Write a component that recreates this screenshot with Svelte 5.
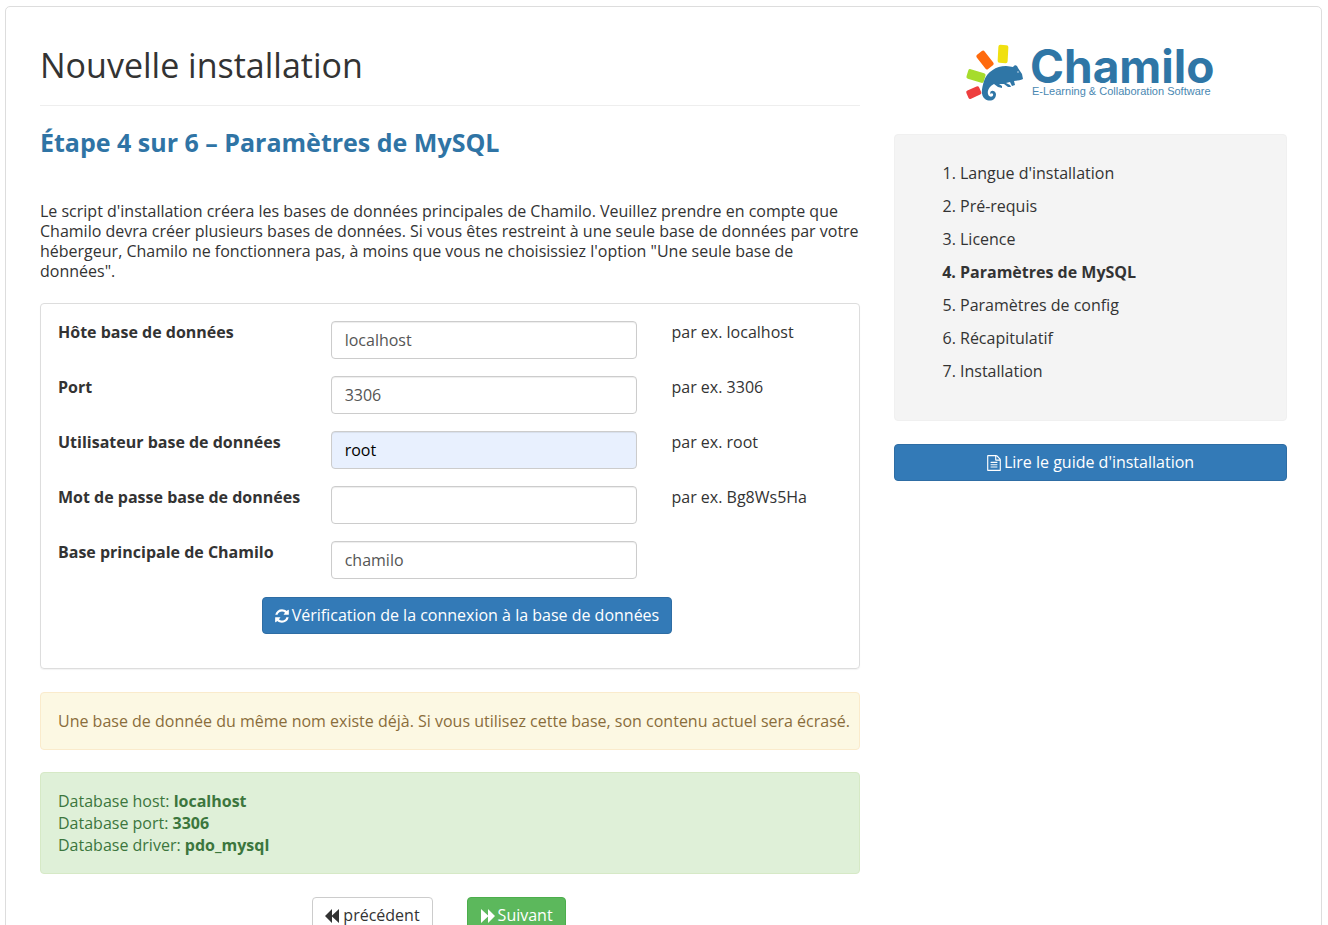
<script>
	const steps = [
		"Langue d'installation",
		'Pré-requis',
		'Licence',
		'Paramètres de MySQL',
		'Paramètres de config',
		'Récapitulatif',
		'Installation'
	];
	const currentStep = 4;

	let fields = $state([
		{ id: 'dbHost', label: 'Hôte base de données', type: 'text', value: 'localhost', hint: 'par ex. localhost' },
		{ id: 'dbPort', label: 'Port', type: 'text', value: '3306', hint: 'par ex. 3306' },
		{ id: 'dbUser', label: 'Utilisateur base de données', type: 'text', value: 'root', hint: 'par ex. root', filled: true },
		{ id: 'dbPass', label: 'Mot de passe base de données', type: 'password', value: '', hint: 'par ex. Bg8Ws5Ha' },
		{ id: 'dbName', label: 'Base principale de Chamilo', type: 'text', value: 'chamilo', hint: '' }
	]);

	const connection = [
		['host', 'localhost'],
		['port', '3306'],
		['driver', 'pdo_mysql']
	];
</script>

<svelte:head>
	<title>Chamilo installation</title>
</svelte:head>

<div class="page">
	<main class="content">
		<h1>Nouvelle installation</h1>
		<h2>Étape 4 sur 6 – Paramètres de MySQL</h2>

		<p class="intro">
			Le script d'installation créera les bases de données principales de Chamilo. Veuillez prendre en compte que
			Chamilo devra créer plusieurs bases de données. Si vous êtes restreint à une seule base de données par votre
			hébergeur, Chamilo ne fonctionnera pas, à moins que vous ne choisissiez l'option "Une seule base de données".
		</p>

		<form onsubmit={(e) => e.preventDefault()}>
			<div class="panel">
				{#each fields as field (field.id)}
					<div class="form-row">
						<label for={field.id}>{field.label}</label>
						<div class="control">
							<input
								id={field.id}
								type={field.type}
								class:filled={field.filled}
								bind:value={field.value}
								autocomplete="off"
							/>
						</div>
						<div class="hint">{field.hint}</div>
					</div>
				{/each}
				<div class="check">
					<button type="submit" class="btn primary">
						<svg width="14" height="16" viewBox="128 0 1536 1792" fill="currentColor" aria-hidden="true">
							<path d="M1639 1056q0 5-1 7-64 268-268 434.500t-478 166.500q-146 0-282.500-55t-243.500-157l-129 129q-19 19-45 19t-45-19-19-45v-448q0-26 19-45t45-19h448q26 0 45 19t19 45-19 45l-137 137q71 66 161 102t187 36q134 0 250-65t186-179q11-17 53-117 8-23 30-23h192q13 0 22.500 9.500t9.500 22.500zm25-800v448q0 26-19 45t-45 19h-448q-26 0-45-19t-19-45 19-45l138-138q-148-137-349-137-134 0-250 65t-186 179q-11 17-53 117-8 23-30 23h-199q-13 0-22.500-9.500t-9.500-22.500v-7q65-268 270-434.500t480-166.500q146 0 284 55.500t245 156.500l130-129q19-19 45-19t45 19 19 45z" />
						</svg>
						<span>Vérification de la connexion à la base de données</span>
					</button>
				</div>
			</div>

			<div class="alert warning">
				Une base de donnée du même nom existe déjà. Si vous utilisez cette base, son contenu actuel sera écrasé.
			</div>

			<div class="alert success">
				{#each connection as [name, value]}
					<div>Database {name}: <strong>{value}</strong></div>
				{/each}
			</div>

			<div class="actions">
				<button type="button" class="btn default">
					<svg width="15" height="14" viewBox="0 0 15 14" fill="currentColor" aria-hidden="true">
						<path d="M0 7 7 0v6.500L14 0v14L7 7.500V14z" />
					</svg>
					<span>précédent</span>
				</button>
				<button type="button" class="btn next">
					<svg width="15" height="14" viewBox="0 0 15 14" fill="currentColor" aria-hidden="true">
						<path d="M15 7 8 0v6.500L1 0v14l7-6.500V14z" />
					</svg>
					<span>Suivant</span>
				</button>
			</div>
		</form>
	</main>

	<aside class="sidebar">
		<div class="logo">
			<svg width="250" height="62" viewBox="0 0 250 62" role="img" aria-label="Chamilo E-Learning &amp; Collaboration Software">
				<rect x="-5" y="-9" width="10" height="18" rx="2" fill="#f0e010" transform="translate(38 10) rotate(3)" />
				<rect x="-5" y="-9" width="10" height="18" rx="2" fill="#ff6a0d" transform="translate(20 16) rotate(-38)" />
				<rect x="-5" y="-9" width="10" height="18" rx="2" fill="#a6dc2c" transform="translate(11 32) rotate(-73)" />
				<rect x="-4" y="-7" width="9" height="14" rx="2" fill="#ee3e3e" transform="translate(9 49) rotate(-114)" />
				<path
					d="M19 37C22 28 31 22 41 22C44 22 46 23 48 23C50 20 52 21 53 24L57 30L58 35C55 37 52 36 49 37L50 41L47 42L45 38L41 39L45 41L46 43L43 43L39 40L34 40L37 42L37 44L33 43L29 40C25 42 22 46 23 50C24 54 29 53 28 50C27 48 25 50 26 51C23 46 30 45 31 50C31 57 24 58 20 55C15 51 17 44 19 37Z"
					fill="#2f76a6"
				/>
				<circle cx="53" cy="28" r="1" fill="#8eb5cf" />
				<text x="65" y="39" class="brand">Chamilo</text>
				<text x="67" y="51" class="tagline">E-Learning &amp; Collaboration Software</text>
			</svg>
		</div>

		<div class="well">
			<ol>
				{#each steps as step, i}
					<li class:current={i + 1 === currentStep}>{step}</li>
				{/each}
			</ol>
		</div>

		<a href="#guide" class="btn primary block">
			<svg width="14" height="16" viewBox="128 0 1536 1792" fill="currentColor" aria-hidden="true">
				<path d="M1596 380q28 28 48 76t20 88v1152q0 40-28 68t-68 28h-1344q-40 0-68-28t-28-68v-1600q0-40 28-68t68-28h896q40 0 88 20t76 48zm-444-244v376h376q-10-29-22-41l-313-313q-12-12-41-22zm384 1528v-1024h-416q-40 0-68-28t-28-68v-416h-768v1536h1280zm-1024-864q0-14 9-23t23-9h704q14 0 23 9t9 23v64q0 14-9 23t-23 9h-704q-14 0-23-9t-9-23v-64zm736 224q14 0 23 9t9 23v64q0 14-9 23t-23 9h-704q-14 0-23-9t-9-23v-64q0-14 9-23t23-9h704zm0 256q14 0 23 9t9 23v64q0 14-9 23t-23 9h-704q-14 0-23-9t-9-23v-64q0-14 9-23t23-9h704z" />
			</svg>
			<span>Lire le guide d'installation</span>
		</a>
	</aside>
</div>

<style>
	:global(body) {
		margin: 0;
		background: #fff;
		color: #333;
		font-family: 'Open Sans', sans-serif;
		font-size: 16px;
		line-height: 22px;
	}

	.page {
		display: flex;
		margin: 6px 6px 24px 5px;
		padding: 17px;
		border: 1px solid #ddd;
		border-radius: 5px;
	}

	.content,
	.sidebar {
		box-sizing: border-box;
		min-width: 0;
		padding: 0 17px;
	}

	.content {
		width: 66.6667%;
	}

	.sidebar {
		width: 33.3333%;
	}

	h1 {
		margin: 22px 0 21px;
		padding-bottom: 20px;
		border-bottom: 1px solid #eee;
		font-size: 34px;
		font-weight: 400;
		line-height: 39px;
	}

	h2 {
		margin: 0 0 44px;
		color: #2f74a5;
		font-size: 25px;
		font-weight: 700;
		line-height: 30px;
	}

	.intro {
		margin: 0 0 22px;
		line-height: 20px;
	}

	.panel {
		margin-bottom: 23px;
		padding: 17px 17px 34px;
		border: 1px solid #ddd;
		border-radius: 4px;
		box-shadow: 0 1px 1px rgba(0, 0, 0, 0.05);
	}

	.form-row {
		display: flex;
		margin: 0 -17px 17px;
	}

	.form-row > * {
		box-sizing: border-box;
		padding: 0 17px;
	}

	label,
	strong {
		font-weight: 700;
	}

	label {
		width: 33.3333%;
		white-space: nowrap;
	}

	.control {
		width: 41.6667%;
	}

	.hint {
		width: 25%;
	}

	input {
		display: block;
		box-sizing: border-box;
		width: 100%;
		height: 38px;
		padding: 6px 13px;
		border: 1px solid #ccc;
		border-radius: 4px;
		background: #fff;
		box-shadow: inset 0 1px 1px rgba(0, 0, 0, 0.075);
		color: #555;
		font: inherit;
	}

	input.filled {
		background: #e8f0fe;
		color: #000;
	}

	.check {
		display: flex;
		justify-content: center;
		margin: 18px 0 0 34px;
	}

	.btn {
		display: inline-flex;
		align-items: center;
		justify-content: center;
		gap: 3px;
		box-sizing: border-box;
		padding: 6px 12px;
		border: 1px solid;
		border-radius: 4px;
		font: inherit;
		line-height: 23px;
		text-decoration: none;
		white-space: nowrap;
		cursor: pointer;
	}

	.primary {
		border-color: #2e6da4;
		background: #337ab7;
		color: #fff;
	}

	.default {
		border-color: #ccc;
		background: #fff;
		color: #333;
	}

	.next {
		border-color: #4cae4c;
		background: #5cb85c;
		color: #fff;
	}

	.block {
		display: flex;
	}

	.alert {
		margin-bottom: 22px;
		padding: 17px 8px 17px 17px;
		border: 1px solid;
		border-radius: 4px;
	}

	.warning {
		border-color: #faebcc;
		background: #fcf8e3;
		color: #8a6d3b;
	}

	.success {
		border-color: #d6e9c6;
		background: #dff0d8;
		color: #3c763d;
	}

	.actions {
		display: flex;
		justify-content: center;
		gap: 34px;
		margin: 23px 22px 0 0;
	}

	.logo {
		display: flex;
		justify-content: center;
		margin: 20px 0 28px;
	}

	.brand {
		fill: #2f76a6;
		font-family: Inter, sans-serif;
		font-size: 46px;
		font-weight: 700;
	}

	.tagline {
		fill: #4a88b2;
		font-family: 'Liberation Sans', sans-serif;
		font-size: 11px;
	}

	.well {
		margin-bottom: 23px;
		padding: 22px 21px 21px;
		border: 1px solid #f0f0f0;
		border-radius: 4px;
		background: #f4f4f4;
	}

	ol {
		margin: 0 0 11px;
		padding-left: 44px;
	}

	li {
		line-height: 33px;
	}

	.current {
		font-weight: 700;
	}
</style>
